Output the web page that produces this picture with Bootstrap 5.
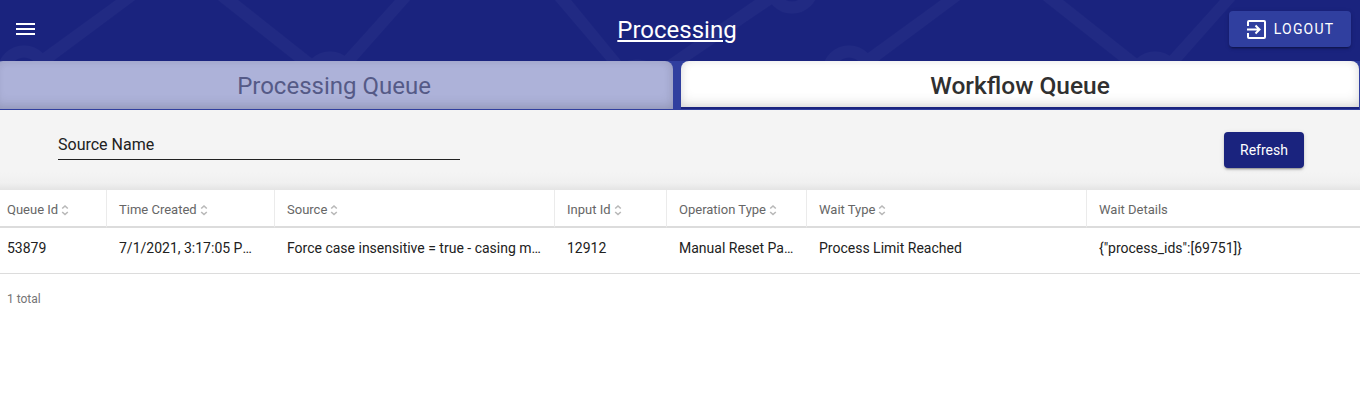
<!DOCTYPE html>
<html lang="en">
<head>
<meta charset="utf-8">
<meta name="viewport" content="width=device-width, initial-scale=1">
<title>Processing</title>
<link href="https://cdn.jsdelivr.net/npm/bootstrap@5.3.0/dist/css/bootstrap.min.css" rel="stylesheet">
<style>
  body { font-family: Roboto, "Liberation Sans", sans-serif; font-size: 14px; color: #212121; overflow: hidden; }
  .topbar { height: 61px; background: #1a237e; padding: 0 9px 3px 14px; }
  .topbar-art { inset: 0; width: 100%; height: 61px; }
  .topbar-side { flex: 1 1 0; }
  .topbar-start { margin-right: -11px; }
  .page-title { font-size: 24px; line-height: 32px; padding-top: 2px; text-underline-offset: 2px; text-decoration-thickness: 1px; }
  .btn-logout { width: 122px; height: 36px; background: #303f9f; color: #fff; font-size: 14px; font-weight: 400; letter-spacing: 1.2px; border-radius: 4px; box-shadow: 0 3px 1px -2px rgba(0,0,0,.2), 0 2px 2px rgba(0,0,0,.14), 0 1px 5px rgba(0,0,0,.12); }
  .tabstrip { height: 49px; background: #303f9f; gap: 8px; padding-right: 1px; margin-left: -5px; border-bottom: 1px solid #303f9f; }
  .queue-tab { flex: 1 1 0; height: 48px; border: 0; border-radius: 8px 8px 0 0; background: #adb2d9; color: #555a87; font-size: 24px; line-height: 32px; padding: 1px 0 0; box-shadow: inset 0 -5px 14px -3px rgba(0,0,0,.14), inset 0 0 8px rgba(0,0,0,.08); }
  .queue-tab.active { background: #fff; color: #303030; font-size: 24.5px; font-weight: 500; border-bottom: 2px solid #1a237e; padding-top: 3px; }
  .filters { height: 80px; padding: 22px 56px 0 58px; background: linear-gradient(#f4f4f4 0 62px, #f0f0f0 73px, #e4e4e4 80px); }
  .source-field { width: 402px; height: 28px; padding: 0 0 2px; border: 0; border-bottom: 1px solid #212121; border-radius: 0; background: transparent; color: #212121; font-size: 16px; }
  .source-field::placeholder { color: #212121; opacity: 1; }
  .btn-refresh { width: 80px; height: 36px; padding: 0; background: #1a237e; color: #fff; font-size: 14px; border-radius: 4px; box-shadow: 0 3px 1px -2px rgba(0,0,0,.2), 0 2px 2px rgba(0,0,0,.14), 0 1px 5px rgba(0,0,0,.12); }
  .queue-table { table-layout: fixed; border-collapse: separate; border-spacing: 0; }
  .queue-table > thead > tr > th { height: 38px; padding: 3px 12px 0; font-size: 13px; font-weight: 400; color: #666; vertical-align: middle; border-bottom: 2px solid #dcdcdc; border-right: 1px solid #ebebeb; line-height: 18px; white-space: nowrap; }
  .queue-table > thead > tr > th:last-child { border-right: 0; }
  .queue-table > tbody > tr > td { height: 46px; padding: 10px 12px 15px; color: #212121; line-height: 20px; border-bottom: 1px solid #dcdcdc; white-space: nowrap; }
  .queue-table > * > tr > :first-child { padding-left: 7px !important; }
  .sorter { margin-left: 3px; vertical-align: -2px; fill: none; stroke: #b8b8b8; stroke-width: 1.6; }
  .time-cell { font-kerning: none; }
  .total { font-size: 12px; line-height: 18px; color: #757575; padding: 16px 7px; }
</style>
</head>
<body>
<svg class="d-none" aria-hidden="true">
  <symbol id="sort" viewBox="0 0 8 12"><path d="M1.2 4.5L4 2L6.8 4.5M1.2 8L4 10.5L6.8 8"/></symbol>
</svg>
<header class="topbar position-relative d-flex align-items-center text-white">
  <svg class="topbar-art position-absolute" aria-hidden="true">
    <defs>
      <pattern id="network" width="825" height="61" patternUnits="userSpaceOnUse">
        <g fill="#212a83">
          <path d="M116 0H135L53 61H32Z"/>
          <path d="M218 0H238L315 61H295Z"/>
          <path d="M395 0H410L356 61H340Z"/>
          <path d="M555 0H571L621 61H607Z"/>
          <path d="M755 0H778L688 61H667Z"/>
        </g>
        <g fill="#1a237e" stroke="#212a83" stroke-width="12">
          <circle cx="24" cy="72" r="20.5"/>
          <circle cx="330" cy="78" r="20.5"/>
          <circle cx="637" cy="86" r="20.5"/>
          <circle cx="792" cy="-13" r="20.5"/>
        </g>
      </pattern>
    </defs>
    <rect width="100%" height="61" fill="url(#network)"/>
  </svg>
  <div class="topbar-side topbar-start position-relative d-flex">
    <button class="btn p-0 border-0 d-flex" aria-label="Menu">
      <svg width="24" height="24" viewBox="0 0 24 24" fill="#fff"><path d="M2 6h19v2H2zM2 11h19v2H2zM2 16h19v2H2z"/></svg>
    </button>
  </div>
  <h1 class="page-title position-relative m-0 fw-normal text-decoration-underline">Processing</h1>
  <div class="topbar-side position-relative d-flex justify-content-end">
    <button class="btn btn-logout border-0 p-0 d-flex align-items-center justify-content-center">
      <svg width="20" height="20" viewBox="0 0 20 20" fill="none" stroke="#fff" stroke-width="2" class="me-1"><path d="M2 7V3Q2 2 3 2H18Q19 2 19 3V18Q19 19 18 19H3Q2 19 2 18V14M1 10.5H13M9.5 6.5L13.5 10.5L9.5 14.5"/></svg>
      <span class="ms-1">LOGOUT</span>
    </button>
  </div>
</header>

<nav class="tabstrip d-flex">
  <button class="queue-tab">Processing Queue</button>
  <button class="queue-tab active">Workflow Queue</button>
</nav>

<section class="filters d-flex justify-content-between align-items-start">
  <input class="source-field" type="text" placeholder="Source Name" aria-label="Source Name">
  <button class="btn btn-refresh border-0">Refresh</button>
</section>

<table class="table queue-table mb-0">
  <colgroup>
    <col style="width:107px"><col style="width:168px"><col style="width:280px"><col style="width:112px"><col style="width:140px"><col style="width:280px"><col>
  </colgroup>
  <thead>
    <tr>
      <th>Queue Id<svg class="sorter" width="8" height="12"><use href="#sort"/></svg></th>
      <th>Time Created<svg class="sorter" width="8" height="12"><use href="#sort"/></svg></th>
      <th>Source<svg class="sorter" width="8" height="12"><use href="#sort"/></svg></th>
      <th>Input Id<svg class="sorter" width="8" height="12"><use href="#sort"/></svg></th>
      <th>Operation Type<svg class="sorter" width="8" height="12"><use href="#sort"/></svg></th>
      <th>Wait Type<svg class="sorter" width="8" height="12"><use href="#sort"/></svg></th>
      <th>Wait Details</th>
    </tr>
  </thead>
  <tbody>
    <tr>
      <td>53879</td>
      <td class="time-cell">7/1/2021, 3:17:05 P…</td>
      <td>Force case insensitive = true - casing m…</td>
      <td>12912</td>
      <td>Manual Reset Pa…</td>
      <td>Process Limit Reached</td>
      <td>{"process_ids":[69751]}</td>
    </tr>
  </tbody>
</table>
<footer class="total">1 total</footer>
<script src="https://cdn.jsdelivr.net/npm/bootstrap@5.3.0/dist/js/bootstrap.bundle.min.js"></script>
</body>
</html>
